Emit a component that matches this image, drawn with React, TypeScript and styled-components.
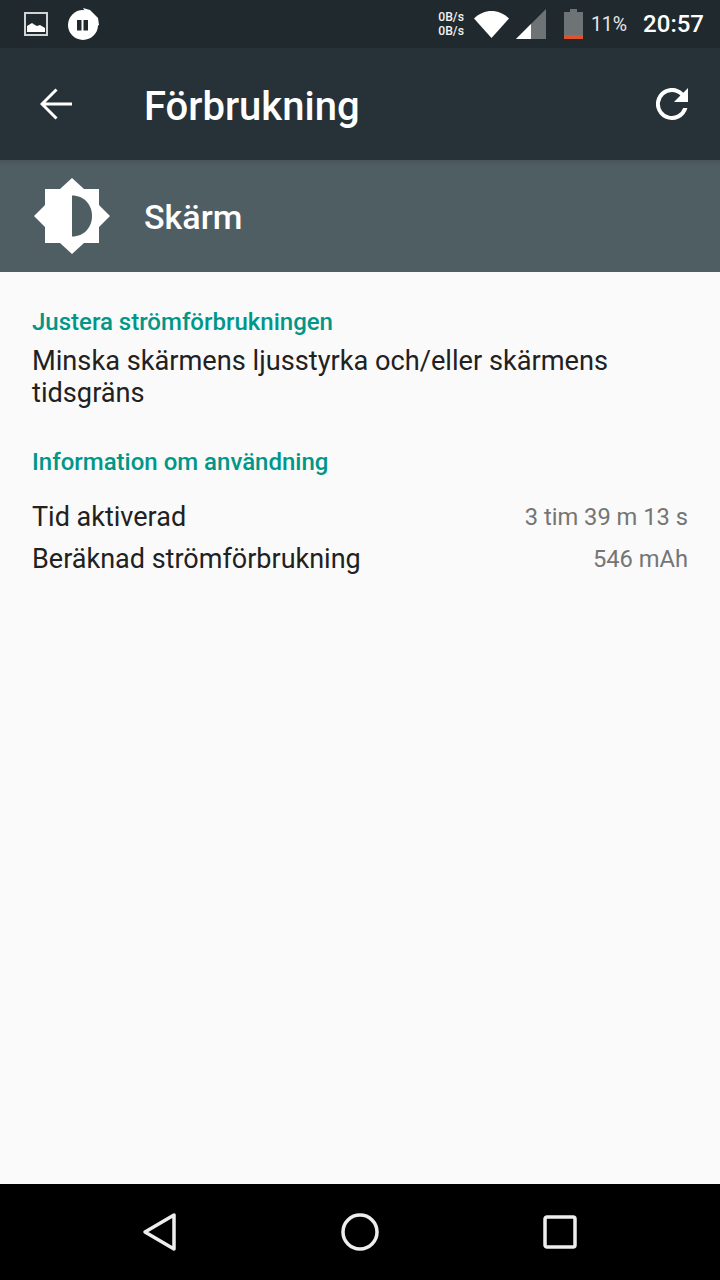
import React from "react";
import styled, { createGlobalStyle } from "styled-components";

const GlobalStyle = createGlobalStyle`
  html, body {
    margin: 0;
    padding: 0;
    background: #fafafa;
    font-family: Roboto, "Noto Sans", sans-serif;
  }
`;

const Screen = styled.div`
  width: 720px;
  height: 1280px;
  display: flex;
  flex-direction: column;
  background: #fafafa;
  overflow: hidden;
`;

const StatusBar = styled.div`
  height: 48px;
  flex: none;
  display: flex;
  align-items: center;
  background: #20292d;
  color: #fff;
  padding: 0 16px 0 24px;
`;
const StatusLeft = styled.div`
  display: flex;
  align-items: center;
  gap: 20px;
`;
const StatusRight = styled.div`
  margin-left: auto;
  display: flex;
  align-items: center;
`;
const NetSpeed = styled.div`
  font-size: 12.2px;
  font-weight: 500;
  line-height: 14px;
  text-align: right;
  margin-right: 10px;
  color: #f2f2f2;
`;
const WifiIcon = styled.svg`
  margin-right: 7px;
`;
const SignalIcon = styled.svg`
  margin-right: 18px;
`;
const Percent = styled.span`
  font-size: 19.5px;
  color: #e4e6e7;
  margin: 0 16px 0 8px;
`;
const Clock = styled.span`
  font-size: 24px;
  font-weight: 500;
`;

const Toolbar = styled.div`
  height: 112px;
  flex: none;
  display: flex;
  align-items: center;
  background: #263238;
  padding: 0 32px 0 40px;
  color: #fff;
`;
const Title = styled.h1`
  margin: 0 0 0 72px;
  padding-top: 4px;
  font-size: 40px;
  font-weight: 500;
  flex: 1;
`;

const Header = styled.div`
  height: 112px;
  flex: none;
  display: flex;
  align-items: center;
  padding-left: 34px;
  color: #fff;
  background: linear-gradient(#47555a 0, #4f5e63 6px);
`;
const HeaderLabel = styled.div`
  margin-left: 34px;
  padding-top: 2px;
  font-size: 34px;
  font-weight: 500;
`;

const Body = styled.div`
  flex: 1;
  padding: 34px 32px 0;
`;
const SectionTitle = styled.div`
  color: #009688;
  font-size: 24px;
  font-weight: 500;
  line-height: 32px;
`;
const Summary = styled.div`
  color: #212121;
  font-size: 27.2px;
  line-height: 32px;
  margin: 7px 0 37px;
`;
const Rows = styled.div`
  margin-top: 23px;
  display: flex;
  flex-direction: column;
  gap: 10px;
`;
const Row = styled.div`
  display: flex;
  justify-content: space-between;
  align-items: center;
  line-height: 32px;
`;
const RowLabel = styled.span`
  color: #212121;
  font-size: 27px;
`;
const RowValue = styled.span`
  color: #757575;
  font-size: 23.7px;
`;

const NavBar = styled.div`
  height: 96px;
  flex: none;
  background: #000;
  display: flex;
  align-items: center;
  justify-content: center;
  gap: 120px;
`;
const NavSlot = styled.div`
  width: 80px;
  display: flex;
  justify-content: center;
`;

const data = [
  { label: "Tid aktiverad", value: "3 tim 39 m 13 s" },
  { label: "Beräknad strömförbrukning", value: "546 mAh" },
];

export default function App() {
  return (
    <Screen>
      <GlobalStyle />
      <StatusBar>
        <StatusLeft>
          <svg width="24" height="24" viewBox="0 0 24 24">
            <rect x="1" y="1" width="22" height="22" fill="none" stroke="#d0d3d4" strokeWidth="2" />
            <path d="M3 20v-6l5-3 3 2 2 1 3-1 5 3v4z" fill="#fff" />
          </svg>
          <svg width="32" height="32" viewBox="0 0 32 32">
            <circle cx="15" cy="17" r="15" fill="#fff" />
            <path d="M15 0l7 2 8 8 1 7-4 2z" fill="#fff" />
            <rect x="9" y="12" width="4.5" height="10.5" fill="#20292d" />
            <rect x="15.5" y="12" width="4.5" height="10.5" fill="#20292d" />
          </svg>
        </StatusLeft>
        <StatusRight>
          <NetSpeed>
            0B/s
            <br />
            0B/s
          </NetSpeed>
          <WifiIcon width="35" height="27" viewBox="0 0 35 27">
            <path d="M0 7.5C10-2.5 25-2.5 35 7.5L17.5 27z" fill="#fff" />
          </WifiIcon>
          <SignalIcon width="30" height="30" viewBox="0 0 30 30">
            <path d="M30 0v30H0z" fill="#6e7476" />
            <path d="M15 15v15H0z" fill="#fff" />
          </SignalIcon>
          <svg width="19" height="30" viewBox="0 0 19 30">
            <path d="M6 0h7v3h6v27H0V3h6z" fill="#6e7476" />
            <rect x="0" y="26" width="19" height="4" fill="#e0522c" />
          </svg>
          <Percent>11%</Percent>
          <Clock>20:57</Clock>
        </StatusRight>
      </StatusBar>
      <Toolbar>
        <svg width="32" height="32" viewBox="0 0 32 32">
          <path d="M32 16H2.500M16.500 1.500L2 16l14.500 14.500" fill="none" stroke="#fff" strokeWidth="3" />
        </svg>
        <Title>Förbrukning</Title>
        <svg width="32" height="32" viewBox="0 0 32 32">
          <path
            d="M27.3 4.7A16 16 0 1 0 31.4 20h-4.2A12 12 0 1 1 16 4a11.8 11.8 0 0 1 8.4 3.6L18 14h14V0z"
            fill="#fff"
          />
        </svg>
      </Toolbar>
      <Header>
        <svg width="76" height="76" viewBox="0 0 76 76">
          <path
            d="M38 0l12 11h15v16l11 11-11 11v16H50L38 76 26 65H11V49L0 38l11-11V11h15z"
            fill="#fff"
          />
          <path d="M38 17.500c12 0 20 9 20 20.500s-8 20.500-20 20.500z" fill="#4f5e63" />
        </svg>
        <HeaderLabel>Skärm</HeaderLabel>
      </Header>
      <Body>
        <SectionTitle>Justera strömförbrukningen</SectionTitle>
        <Summary>Minska skärmens ljusstyrka och/eller skärmens tidsgräns</Summary>
        <SectionTitle>Information om användning</SectionTitle>
        <Rows>
          {data.map((r) => (
            <Row key={r.label}>
              <RowLabel>{r.label}</RowLabel>
              <RowValue>{r.value}</RowValue>
            </Row>
          ))}
        </Rows>
      </Body>
      <NavBar>
        <NavSlot>
          <svg width="36" height="40" viewBox="0 0 36 40">
            <path d="M32 3v34L3 20z" fill="none" stroke="#eee" strokeWidth="3.5" strokeLinejoin="round" />
          </svg>
        </NavSlot>
        <NavSlot>
          <svg width="38" height="38" viewBox="0 0 38 38">
            <circle cx="19" cy="19" r="17" fill="none" stroke="#eee" strokeWidth="3.5" />
          </svg>
        </NavSlot>
        <NavSlot>
          <svg width="34" height="34" viewBox="0 0 34 34">
            <rect x="2" y="2" width="30" height="30" rx="2" fill="none" stroke="#eee" strokeWidth="3.5" />
          </svg>
        </NavSlot>
      </NavBar>
    </Screen>
  );
}
